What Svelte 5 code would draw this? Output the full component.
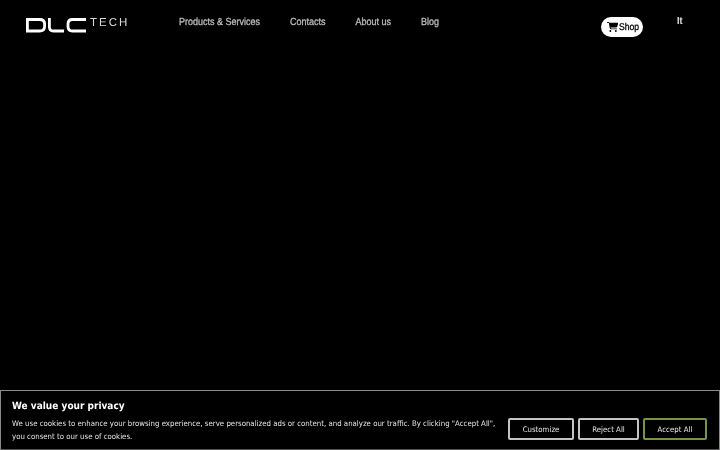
<script>
  const nav = ['Products & Services', 'Contacts', 'About us', 'Blog'];
</script>

<div class="page">
  <header class="top">
    <a class="logo" href="#home" aria-label="DLC Tech">
      <svg class="mark" width="61" height="16" viewBox="0 0 61 16" fill="none" stroke="#fff" stroke-width="2.8">
        <path d="M1.400 2.500H13.500Q18.600 2.500 18.600 7V9.500Q18.600 14 13.500 14H1.400Z" />
        <path d="M23.400 1V10Q23.400 14 27.400 14H38" />
        <path d="M60 2.500H46.500Q42 2.500 42 7V9.500Q42 14 46.500 14H60" />
      </svg>
      <span class="tech">TECH</span>
    </a>
    <nav class="links">
      {#each nav as item}
        <a href="#link">{item}</a>
      {/each}
    </nav>
    <a class="shop" href="#shop">
      <svg width="11" height="10" viewBox="0 0 576 512" fill="#000"><path d="M0 24C0 11 11 0 24 0H69.500C92 0 112 13 121 32H542C568 32 587 57 580 82L539 234C531 262 506 281 477 281H189L194 311C196 322 206 331 218 331H504C517 331 528 342 528 355S517 379 504 379H218C183 379 153 354 147 320L96 44C95 41 92 48 69 48H24C11 48 0 37 0 24ZM128 464A48 48 0 1 1 224 464 48 48 0 1 1 128 464ZM464 416A48 48 0 1 1 464 512 48 48 0 1 1 464 416Z" /></svg>
      <span>Shop</span>
    </a>
    <a class="lang" href="#it">It</a>
  </header>

  <section class="cookie">
    <h2>We value your privacy</h2>
    <div class="row">
      <p>We use cookies to enhance your browsing experience, serve personalized ads or content, and analyze our traffic. By clicking "Accept All", you consent to our use of cookies.</p>
      <div class="btns">
        <button><span>Customize</span></button>
        <button><span>Reject All</span></button>
        <button class="accept"><span>Accept All</span></button>
      </div>
    </div>
  </section>
</div>

<style>
  :global(body) { margin: 0; background: #000; }
  .page {
    width: 720px;
    height: 450px;
    display: flex;
    flex-direction: column;
    justify-content: space-between;
    overflow: hidden;
    background: #000;
    filter: blur(0.4px);
    text-rendering: geometricPrecision;
  }
  a { text-decoration: none; }
  .top {
    display: flex;
    align-items: flex-start;
    height: 46px;
    font-family: "Liberation Sans", Arial, sans-serif;
  }
  .logo {
    display: flex;
    align-items: flex-start;
    margin: 17px 0 0 26px;
    width: 153px;
    flex: none;
  }
  .mark { display: block; flex: none; }
  .tech {
    font-size: 11.500px;
    line-height: 13px;
    letter-spacing: 2px;
    color: #d8d8d8;
    margin: 0 0 0 3px;
  }
  .links {
    display: flex;
    gap: 30px;
    margin-top: 16px;
    width: 422px;
    flex: none;
  }
  .links a {
    font-size: 9px;
    line-height: 13px;
    color: #b8b8b8;
    -webkit-text-stroke: 0.3px #b8b8b8;
    white-space: nowrap;
    transform: scaleY(1.14);
  }
  .shop {
    display: flex;
    align-items: center;
    gap: 1px;
    margin: 17px 0 0 0;
    width: 42px;
    height: 20px;
    box-sizing: border-box;
    padding-left: 6px;
    border-radius: 10px;
    background: #fff;
    color: #000;
    font-size: 8.600px;
    -webkit-text-stroke: 0.25px #000;
    flex: none;
  }
  .shop span { transform: scaleY(1.14); }
  .lang {
    margin: 15px 0 0 34px;
    font-size: 9px;
    line-height: 12px;
    font-weight: 700;
    color: #e8e8e8;
    transform: scaleY(1.14);
  }
  .cookie {
    box-sizing: border-box;
    height: 60px;
    border: 1px solid #8a8a8a;
    border-bottom-color: #555;
    padding: 10px 12px 0 11px;
    background: #000;
    font-family: "DejaVu Sans", Verdana, sans-serif;
  }
  h2 {
    margin: 0;
    font-size: 9px;
    line-height: 12px;
    font-weight: 700;
    color: #fff;
    transform: scaleY(1.1);
  }
  .row {
    display: flex;
    justify-content: space-between;
    align-items: flex-start;
    margin-top: 4px;
  }
  p {
    margin: 0;
    padding-top: 1px;
    width: 490px;
    font-size: 7px;
    line-height: 12px;
    color: #e4e4e4;
    transform: scaleY(1.1);
  }
  .btns { display: flex; gap: 4px; margin-top: 1px; }
  button {
    box-sizing: border-box;
    width: 66px;
    height: 22px;
    padding: 2px 0 0;
    border: 2px solid #c4c4c4;
    border-radius: 2px;
    background: #000;
    color: #e8e8e8;
    font: 7px "DejaVu Sans", Verdana, sans-serif;
  }
  button span { display: block; transform: scaleY(1.1); }
  button:nth-child(2) { width: 61px; }
  .accept { width: 64px; border-color: #76954a; }
</style>
